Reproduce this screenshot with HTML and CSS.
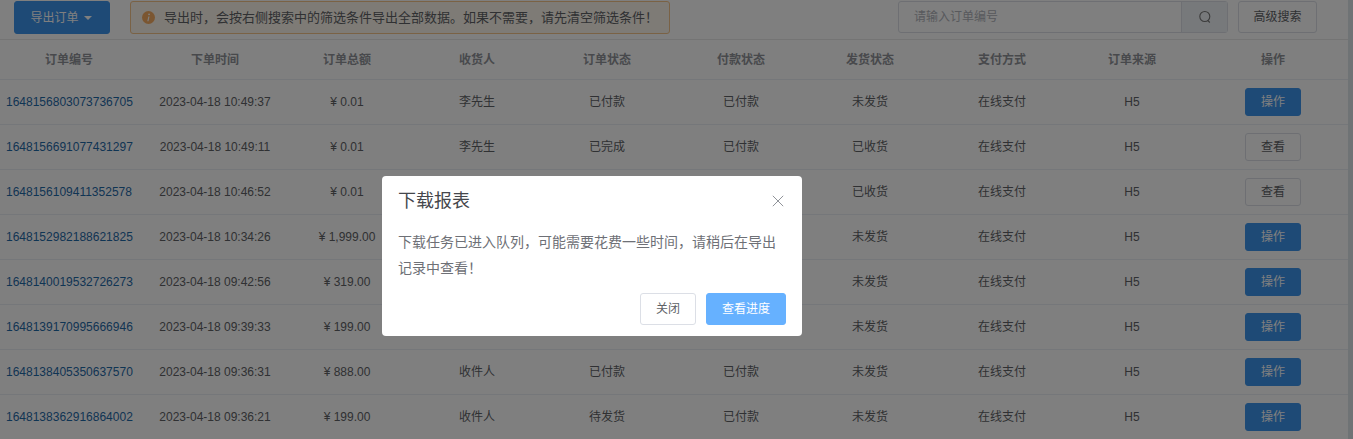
FILE: index.html
```html
<!DOCTYPE html>
<html lang="zh">
<head>
<meta charset="utf-8">
<title>订单列表</title>
<link rel="stylesheet" href="styles.css">
</head>
<body>
<div class="page">
  <div class="toolbar">
    <button class="btn btn-primary export">导出订单<span class="caret"></span></button>
    <div class="alert">
      <svg class="alert-icon" viewBox="0 0 14 14"><circle cx="7" cy="7" r="7" fill="#f6ad62"/><circle cx="7.600" cy="3.600" r="1" fill="#fff"/><path d="M6.800 5.800h1.300L7 11h-1.300z" fill="#fff"/></svg>
      <span>导出时，会按右侧搜索中的筛选条件导出全部数据。如果不需要，请先清空筛选条件！</span>
    </div>
    <div class="search">
      <span class="search-input">请输入订单编号</span>
      <span class="search-btn"><svg viewBox="0 0 14 14" width="14" height="14"><circle cx="6.800" cy="6.500" r="5" fill="none" stroke="#777" stroke-width="1.100"/><path d="M9.800 10.500l2 2" stroke="#777" stroke-width="1.100"/></svg></span>
    </div>
    <button class="btn btn-default adv">高级搜索</button>
  </div>
  <div class="row head">
    <div class="id">订单编号</div><div>下单时间</div><div>订单总额</div><div>收货人</div><div>订单状态</div><div>付款状态</div><div>发货状态</div><div>支付方式</div><div>订单来源</div><div class="act">操作</div>
  </div>
  <div class="row"><div class="id"><a>1648156803073736705</a></div><div>2023-04-18 10:49:37</div><div>¥ 0.01</div><div>李先生</div><div>已付款</div><div>已付款</div><div>未发货</div><div>在线支付</div><div>H5</div><div class="act"><button class="btn btn-primary op">操作</button></div></div>
  <div class="row"><div class="id"><a>1648156691077431297</a></div><div>2023-04-18 10:49:11</div><div>¥ 0.01</div><div>李先生</div><div>已完成</div><div>已付款</div><div>已收货</div><div>在线支付</div><div>H5</div><div class="act"><button class="btn btn-default op">查看</button></div></div>
  <div class="row"><div class="id"><a>1648156109411352578</a></div><div>2023-04-18 10:46:52</div><div>¥ 0.01</div><div>李先生</div><div>已完成</div><div>已付款</div><div>已收货</div><div>在线支付</div><div>H5</div><div class="act"><button class="btn btn-default op">查看</button></div></div>
  <div class="row"><div class="id"><a>1648152982188621825</a></div><div>2023-04-18 10:34:26</div><div>¥ 1,999.00</div><div>收件人</div><div>已付款</div><div>已付款</div><div>未发货</div><div>在线支付</div><div>H5</div><div class="act"><button class="btn btn-primary op">操作</button></div></div>
  <div class="row"><div class="id"><a>1648140019532726273</a></div><div>2023-04-18 09:42:56</div><div>¥ 319.00</div><div>收件人</div><div>已付款</div><div>已付款</div><div>未发货</div><div>在线支付</div><div>H5</div><div class="act"><button class="btn btn-primary op">操作</button></div></div>
  <div class="row"><div class="id"><a>1648139170995666946</a></div><div>2023-04-18 09:39:33</div><div>¥ 199.00</div><div>收件人</div><div>已付款</div><div>已付款</div><div>未发货</div><div>在线支付</div><div>H5</div><div class="act"><button class="btn btn-primary op">操作</button></div></div>
  <div class="row"><div class="id"><a>1648138405350637570</a></div><div>2023-04-18 09:36:31</div><div>¥ 888.00</div><div>收件人</div><div>已付款</div><div>已付款</div><div>未发货</div><div>在线支付</div><div>H5</div><div class="act"><button class="btn btn-primary op">操作</button></div></div>
  <div class="row"><div class="id"><a>1648138362916864002</a></div><div>2023-04-18 09:36:21</div><div>¥ 199.00</div><div>收件人</div><div>待发货</div><div>已付款</div><div>未发货</div><div>在线支付</div><div>H5</div><div class="act"><button class="btn btn-primary op">操作</button></div></div>
</div>
<div class="scrollbar"></div>
<div class="overlay">
  <div class="dialog">
    <div class="dialog-head">
      <span class="dialog-title">下载报表</span>
      <svg class="close" viewBox="0 0 12 12" width="12" height="12"><path d="M.8.8l10.400 10.400M11.200.8L.8 11.200" stroke="#909399" stroke-width="1" fill="none"/></svg>
    </div>
    <div class="dialog-body">下载任务已进入队列，可能需要花费一些时间，请稍后在导出记录中查看！</div>
    <div class="dialog-foot">
      <button class="btn dlg-btn dlg-close">关闭</button>
      <button class="btn dlg-btn dlg-go">查看进度</button>
    </div>
  </div>
</div>
</body>
</html>
```
FILE: styles.css
```css
* { box-sizing: border-box; }
html, body { margin: 0; height: 100%; overflow: hidden; background: #fff; }
body { display: flex; font: 12px/1.5 "Liberation Sans", "Noto Sans CJK SC", sans-serif; color: #606266; }
.page { flex: 0 0 1348px; height: 439px; overflow: hidden; }
.scrollbar { flex: 1; background: #dfe6ea; }
.toolbar { height: 40px; padding: 1px 0 0 14px; display: flex; align-items: flex-start; border-bottom: 1px solid #e8e8e8; }
.btn { font: inherit; border-radius: 3px; cursor: pointer; padding: 0; }
.btn-primary { background: #3d94ec; border: 1px solid #3d94ec; color: #fff; }
.btn-default { background: #fff; border: 1px solid #dcdfe6; color: #606266; }
.export { width: 96px; height: 33px; padding-right: 2px; }
.caret { display: inline-block; margin-left: 5px; border: 4px solid transparent; border-top: 4px solid #fff; border-bottom: 0; vertical-align: 2px; }
.alert { margin-left: 20px; width: 540px; height: 33px; display: flex; align-items: center; padding-left: 11px; background: #fdf6ec; border: 1px solid #f5c58a; border-radius: 3px; font-size: 13px; color: #606266; }
.alert-icon { width: 13px; height: 13px; margin-right: 9px; }
.search { margin-left: 228px; display: flex; width: 330px; height: 32px; border: 1px solid #dcdfe6; border-radius: 3px; }
.search-input { flex: 1; padding-left: 15px; line-height: 30px; color: #b0b3ba; }
.search-btn { width: 46px; display: flex; align-items: center; justify-content: center; background: #eef2f6; border-left: 1px solid #dcdfe6; }
.adv { margin-left: 10px; width: 79px; height: 32px; }
.row { display: grid; grid-template-columns: 138px 154px 110px 150px 110px 158px 100px 164px 96px 168px; height: 45px; align-items: center; border-bottom: 1px solid #ebeef5; text-align: center; }
.row.head { height: 40px; font-weight: 700; color: #909399; }
.row:not(.head) .id { text-align: left; padding-left: 6px; }
.row > div { white-space: nowrap; }
.id a { color: #1f6aa8; }
.act { padding-left: 18px; }
.op { width: 56px; height: 28px; }
.overlay { position: fixed; inset: 0; background: rgba(0, 0, 0, .5); z-index: 10; display: flex; align-items: flex-start; }
.dialog { width: 420px; height: 160px; margin: 176px 0 0 382px; background: #fff; border-radius: 4px; padding: 15px 16px 0; }
.dialog-head { display: flex; justify-content: space-between; align-items: center; height: 20px; }
.dialog-title { font-size: 18px; line-height: 20px; color: #45474c; }
.close { margin-right: 2px; }
.dialog-body { margin-top: 18px; font-size: 14px; line-height: 26px; color: #6e7076; }
.dialog-foot { margin-top: 12px; display: flex; justify-content: flex-end; gap: 10px; }
.dlg-btn { height: 32px; }
.dlg-close { width: 56px; background: #fff; border: 1px solid #dcdfe6; color: #606266; }
.dlg-go { width: 80px; background: #66b1ff; border: 1px solid #66b1ff; color: #fff; }
```
